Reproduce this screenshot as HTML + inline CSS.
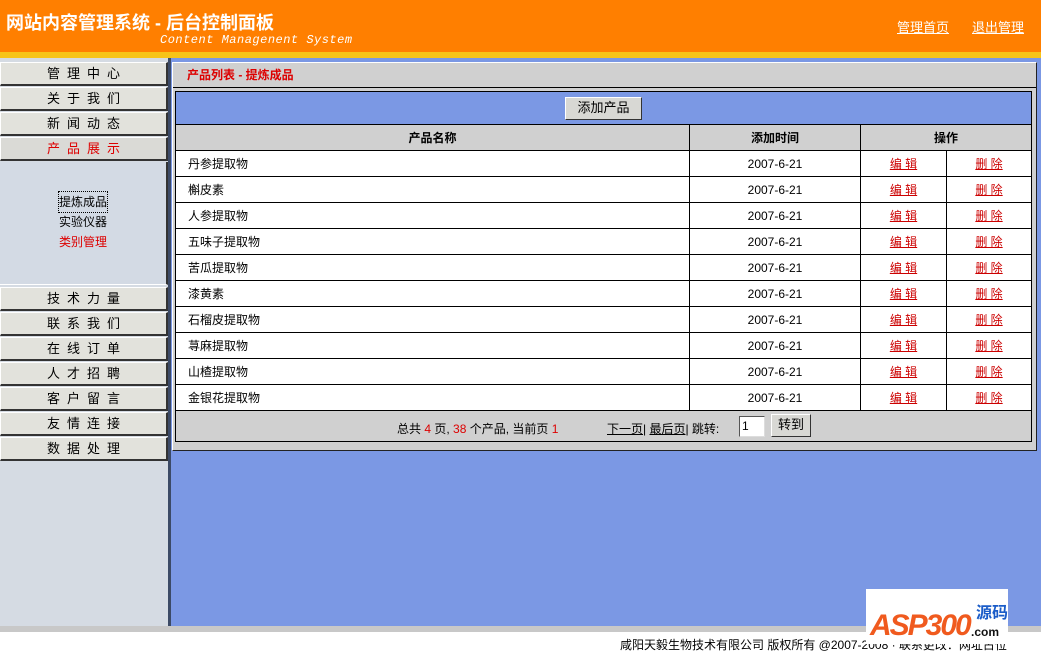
<!DOCTYPE html>
<html><head><meta charset="utf-8"><style>
*{margin:0;padding:0;box-sizing:border-box}
body{width:1041px;height:644px;overflow:hidden;position:relative;background:#fff;font-family:"Liberation Sans","Noto Sans CJK SC","WenQuanYi Zen Hei",sans-serif;font-size:12px;color:#000}
.a{position:absolute}
.hdr{left:0;top:0;width:1041px;height:52px;background:#ff7f00}
.ys{left:0;top:52px;width:1041px;height:6px;background:#f7c418}
.side{left:0;top:58px;width:169px;height:568px;background:#d5dbe3}
.div{left:168px;top:58px;width:3px;height:568px;background:#3c4a66}
.main{left:171px;top:58px;width:870px;height:568px;background:#7b98e4}
.btn{position:absolute;left:0;width:168px;height:24px;background:#e2e2dc;border:1px solid #fff;border-right:2px solid #333;border-bottom:2px solid #333;text-align:center;line-height:21px;font-size:13px;letter-spacing:7px;padding-left:7px}
.gs{left:0;top:626px;width:1041px;height:6px;background:#c8c8c8}
table{border-collapse:collapse}
td{border:1px solid #000;height:26px;font-size:12px}
a{color:#c00;text-decoration:underline}
</style></head><body>
<div class="a hdr"></div>
<div class="a" style="left:6px;top:9px;color:#fff;font-size:18px;font-weight:bold">网站内容管理系统 - 后台控制面板</div>
<div class="a" style="left:160px;top:33px;color:#fff;font-family:'Liberation Mono',monospace;font-style:italic;font-size:12px;letter-spacing:.5px">Content Managenent System</div>
<div class="a" style="left:897px;top:17px;color:#fff;font-size:13px;text-decoration:underline">管理首页</div>
<div class="a" style="left:972px;top:17px;color:#fff;font-size:13px;text-decoration:underline">退出管理</div>
<div class="a ys"></div>
<div class="a side"></div>
<div class="a main"></div>
<div class="a div"></div>
<div class="btn" style="top:62px">管理中心</div>
<div class="btn" style="top:87px">关于我们</div>
<div class="btn" style="top:112px">新闻动态</div>
<div class="btn" style="top:137px;color:#d00;background:#dadad6">产品展示</div>
<div class="a" style="left:0;top:162px;width:168px;height:123px;background:#d3dae4;border-right:2px solid #333;border-bottom:1px solid #fff"></div>
<div class="a" style="left:59px;top:192px;font-size:12px;line-height:20px">
<div style="outline:1px dotted #000">提炼成品</div><div>实验仪器</div><div style="color:#d00">类别管理</div></div>
<div class="btn" style="top:287px">技术力量</div>
<div class="btn" style="top:312px">联系我们</div>
<div class="btn" style="top:337px">在线订单</div>
<div class="btn" style="top:362px">人才招聘</div>
<div class="btn" style="top:387px">客户留言</div>
<div class="btn" style="top:412px">友情连接</div>
<div class="btn" style="top:437px">数据处理</div>

<div class="a" style="left:172px;top:62px;width:865px;height:389px;background:#d0d0d0;border:1px solid #222;border-top-color:#fff;border-left-color:#fff"></div>
<div class="a" style="left:173px;top:63px;width:863px;height:25px;background:#d0d0d0;border-bottom:1px solid #000"></div>
<div class="a" style="left:187px;top:66px;color:#d00;font-weight:bold;font-size:12px">产品列表 - 提炼成品</div>
<div class="a" style="left:175px;top:91px;width:857px;height:351px;border:1px solid #000;background:#d0d0d0">
<div style="height:33px;background:#7b98e4;border-bottom:1px solid #000;position:relative">
<div class="a" style="left:389px;top:5px;width:77px;height:23px;background:#d8d8d4;border:1px solid #fff;border-right-color:#333;border-bottom-color:#333;text-align:center;line-height:20px;font-size:13px">添加产品</div></div>
<table style="width:857px;margin-left:-1px;margin-top:-1px">
<tr style="background:#d0d0d0;font-weight:bold"><td style="width:514px;text-align:center;height:26px">产品名称</td><td style="width:171px;text-align:center">添加时间</td><td colspan="2" style="text-align:center">操作</td></tr>
</table>
<table style="width:857px;margin-left:-1px;margin-top:-1px;background:#fff" id="t">
<tr><td style="width:514px;padding-left:12px">丹参提取物</td><td style="width:171px;text-align:center">2007-6-21</td><td style="width:86px;text-align:center"><a>编 辑</a></td><td style="text-align:center"><a>删 除</a></td></tr>
<tr><td style="padding-left:12px">槲皮素</td><td style="text-align:center">2007-6-21</td><td style="text-align:center"><a>编 辑</a></td><td style="text-align:center"><a>删 除</a></td></tr>
<tr><td style="padding-left:12px">人参提取物</td><td style="text-align:center">2007-6-21</td><td style="text-align:center"><a>编 辑</a></td><td style="text-align:center"><a>删 除</a></td></tr>
<tr><td style="padding-left:12px">五味子提取物</td><td style="text-align:center">2007-6-21</td><td style="text-align:center"><a>编 辑</a></td><td style="text-align:center"><a>删 除</a></td></tr>
<tr><td style="padding-left:12px">苦瓜提取物</td><td style="text-align:center">2007-6-21</td><td style="text-align:center"><a>编 辑</a></td><td style="text-align:center"><a>删 除</a></td></tr>
<tr><td style="padding-left:12px">漆黄素</td><td style="text-align:center">2007-6-21</td><td style="text-align:center"><a>编 辑</a></td><td style="text-align:center"><a>删 除</a></td></tr>
<tr><td style="padding-left:12px">石榴皮提取物</td><td style="text-align:center">2007-6-21</td><td style="text-align:center"><a>编 辑</a></td><td style="text-align:center"><a>删 除</a></td></tr>
<tr><td style="padding-left:12px">荨麻提取物</td><td style="text-align:center">2007-6-21</td><td style="text-align:center"><a>编 辑</a></td><td style="text-align:center"><a>删 除</a></td></tr>
<tr><td style="padding-left:12px">山楂提取物</td><td style="text-align:center">2007-6-21</td><td style="text-align:center"><a>编 辑</a></td><td style="text-align:center"><a>删 除</a></td></tr>
<tr><td style="padding-left:12px">金银花提取物</td><td style="text-align:center">2007-6-21</td><td style="text-align:center"><a>编 辑</a></td><td style="text-align:center"><a>删 除</a></td></tr>
</table>
<div class="a" style="left:221px;top:328px;font-size:12px">总共 <span style="color:#d00">4</span> 页, <span style="color:#d00">38</span> 个产品, 当前页 <span style="color:#d00">1</span></div>
<div class="a" style="left:431px;top:328px;font-size:12px"><u>下一页</u>| <u>最后页</u>| 跳转:</div>
<div class="a" style="left:563px;top:324px;width:26px;height:21px;background:#fff;border:1px solid #555;border-right-color:#ddd;border-bottom-color:#ddd;padding-left:2px;line-height:18px">1</div>
<div class="a" style="left:595px;top:322px;width:40px;height:23px;background:#d8d8d4;border:1px solid #fff;border-right-color:#333;border-bottom-color:#333;text-align:center;line-height:20px;font-size:13px">转到</div>
</div>

<div class="a gs"></div>
<div class="a" style="left:620px;top:636px;font-size:12px;white-space:nowrap">咸阳天毅生物技术有限公司 版权所有 @2007-2008 · 联系更改：网址占位</div>
<div class="a" style="left:866px;top:589px;width:142px;height:55px;background:#fff;white-space:nowrap">
<div class="a" style="left:4px;top:20px;font-size:30px;font-weight:bold;font-style:italic;color:#f05a1e;letter-spacing:-2px">ASP300</div>
<div class="a" style="left:110px;top:10px;font-size:16px;font-weight:bold;color:#1a5cc8">源码</div>
<div class="a" style="left:105px;top:36px;font-size:12px;font-weight:bold;color:#111">.com</div>
</div>
</body></html>
